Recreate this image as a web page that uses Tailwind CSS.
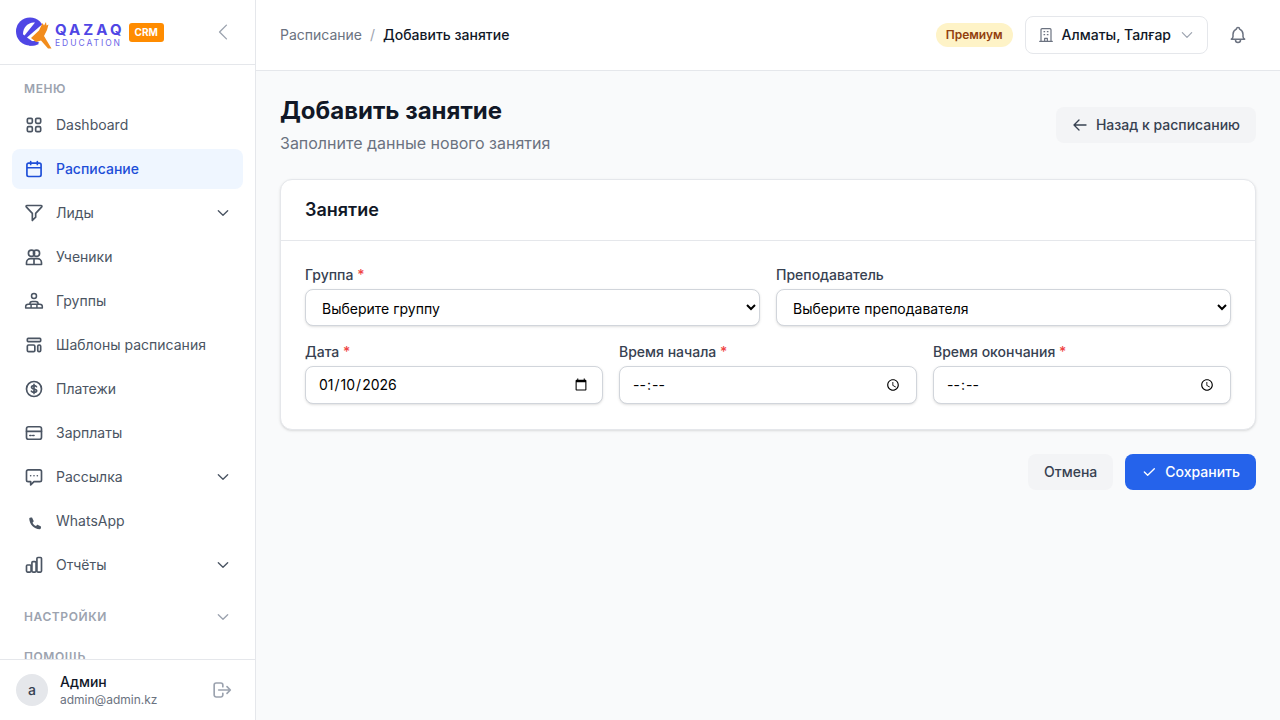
<!DOCTYPE html>
<html lang="ru">
<head>
<meta charset="utf-8">
<script src="https://cdn.jsdelivr.net/npm/@tailwindcss/browser@4"></script>
</head>
<body class="h-[720px] w-[1280px] overflow-hidden bg-[#f9fafb] font-['Inter',sans-serif] text-[#111827]">
<div class="flex h-[720px]">
  <aside class="flex h-full w-[256px] shrink-0 flex-col border-r border-[#e5e7eb] bg-white">
    <div class="flex h-[65px] shrink-0 items-center justify-between border-b border-[#e5e7eb] pl-4 pr-[21px]">
      <div class="flex items-center gap-1">
        <div class="flex items-center gap-[3px]">
          <svg class="h-[33px] w-[36px]" viewBox="0 0 36 33">
            <circle cx="14" cy="15.500" r="14" fill="#4f46e5"/>
            <path fill="#fff" d="M7 17.500C7 11 13 5.500 19 6.500L8.500 19.500C7.500 19 7 18.500 7 17.500Z"/>
            <path fill="#fff" d="M11 21.500 30 5 30 27 16 25Z"/>
            <path fill="#4f46e5" d="M8 20C10 25 15 26.500 19.500 24.500L23 28C19 30 15 30 13 29.500Z"/>
            <path fill="#f28c1c" d="M15 22 23 14.500 26.500 7 28 9.500 30 6 30.500 9.500 32.500 8.500 31 14 28 20 35.500 32.500H32L25 24.500 20 26Z"/>
          </svg>
          <div class="flex flex-col pt-[5px]">
            <span class="text-[15px] leading-[15px] font-bold tracking-[3.050px] text-[#4f46e5]">QAZAQ</span>
            <span class="mt-[1px] text-[8.500px] leading-[10px] tracking-[1.950px] text-[#6d66e8]">EDUCATION</span>
          </div>
        </div>
        <span class="flex h-[19px] w-[35px] items-center justify-center rounded-[3px] bg-[#ff8c00] text-[10px] font-bold text-white">CRM</span>
      </div>
      <svg class="h-[22px] w-[22px] text-[#9ca3af]" fill="none" stroke="currentColor" stroke-width="1.500" viewBox="0 0 24 24"><path stroke-linecap="round" stroke-linejoin="round" d="M15.750 19.500 8.250 12l7.500-7.500"/></svg>
    </div>
    <nav class="min-h-0 flex-1 overflow-hidden px-3 pt-4">
      <div class="mb-2 px-3 text-[12px] leading-4 font-semibold tracking-[0.600px] text-[#9ca3af]">МЕНЮ</div>
      <div class="flex flex-col gap-1">
        <a class="flex h-10 items-center gap-3 rounded-lg px-3 text-sm text-[#4b5563]">
          <svg class="h-5 w-5 shrink-0" fill="none" stroke="currentColor" stroke-width="2" viewBox="0 0 24 24"><rect x="4" y="4" width="6" height="6" rx="1.500"/><rect x="14" y="4" width="6" height="6" rx="1.500"/><rect x="4" y="14" width="6" height="6" rx="1.500"/><rect x="14" y="14" width="6" height="6" rx="1.500"/></svg>
          Dashboard</a>
        <a class="flex h-10 items-center gap-3 rounded-lg bg-[#eff6ff] px-3 text-sm font-medium text-[#1d4ed8]">
          <svg class="h-5 w-5 shrink-0" fill="none" stroke="currentColor" stroke-width="2" viewBox="0 0 24 24"><path stroke-linecap="round" stroke-linejoin="round" d="M3.500 7a2 2 0 0 1 2-2h13a2 2 0 0 1 2 2v12a2 2 0 0 1-2 2h-13a2 2 0 0 1-2-2V7ZM16 3v3.500M8 3v3.500M3.500 10.500h17"/></svg>
          Расписание</a>
        <a class="flex h-10 items-center gap-3 rounded-lg px-3 text-sm text-[#4b5563]">
          <svg class="h-5 w-5 shrink-0" fill="none" stroke="currentColor" stroke-width="2" viewBox="0 0 24 24"><path stroke-linecap="round" stroke-linejoin="round" d="M3.500 3h17a1 1 0 0 1 .8 1.600L14 12.500V17l-4 4v-8.500L2.700 4.600A1 1 0 0 1 3.500 3Z"/></svg>
          <span class="flex-1">Лиды</span>
          <svg class="h-4 w-4 shrink-0" fill="none" stroke="currentColor" stroke-width="2" viewBox="0 0 24 24"><path stroke-linecap="round" stroke-linejoin="round" d="m5 8.500 7 7 7-7"/></svg></a>
        <a class="flex h-10 items-center gap-3 rounded-lg px-3 text-sm text-[#4b5563]">
          <svg class="h-5 w-5 shrink-0" fill="none" stroke="currentColor" stroke-width="2" viewBox="0 0 24 24"><circle cx="9" cy="7.500" r="3.700"/><circle cx="15" cy="7.500" r="3.700"/><path stroke-linejoin="round" d="M3 21v-2a5 5 0 0 1 5-5h8a5 5 0 0 1 5 5v2ZM12 14.500V21"/></svg>
          Ученики</a>
        <a class="flex h-10 items-center gap-3 rounded-lg px-3 text-sm text-[#4b5563]">
          <svg class="h-5 w-5 shrink-0" fill="none" stroke="currentColor" stroke-width="1.800" viewBox="0 0 24 24"><circle cx="12" cy="6" r="3"/><path stroke-linejoin="round" d="M7 16v-.5a3 3 0 0 1 3-3h4a3 3 0 0 1 3 3v.5M2 20.500v-1.500a3 3 0 0 1 3-3h14a3 3 0 0 1 3 3v1.500ZM8.500 16v4.500M15.500 16v4.500"/></svg>
          Группы</a>
        <a class="flex h-10 items-center gap-3 rounded-lg px-3 text-sm text-[#4b5563]">
          <svg class="h-5 w-5 shrink-0" fill="none" stroke="currentColor" stroke-width="2" viewBox="0 0 24 24"><rect x="4" y="4" width="16" height="4" rx="1"/><rect x="4" y="12" width="9" height="8" rx="1.500"/><rect x="16.500" y="12" width="3.500" height="8" rx="1.500"/></svg>
          Шаблоны расписания</a>
        <a class="flex h-10 items-center gap-3 rounded-lg px-3 text-sm text-[#4b5563]">
          <svg class="h-5 w-5 shrink-0" fill="none" stroke="currentColor" stroke-width="2" viewBox="0 0 24 24"><circle cx="12" cy="12" r="9"/><path stroke-linecap="round" stroke-linejoin="round" d="M12 6.500v11M15 9.300C14.500 8.300 13.400 8 12 8c-1.700 0-3 .8-3 2 0 2.800 6.200 1.400 6.200 4.100 0 1.200-1.300 1.900-3.200 1.900-1.500 0-2.600-.4-3.200-1.400"/></svg>
          Платежи</a>
        <a class="flex h-10 items-center gap-3 rounded-lg px-3 text-sm text-[#4b5563]">
          <svg class="h-5 w-5 shrink-0" fill="none" stroke="currentColor" stroke-width="2" viewBox="0 0 24 24"><rect x="3" y="4.500" width="18" height="15" rx="2.500"/><path stroke-linecap="round" d="M3 10h18M7 15h1.500M10.500 15h1.500"/></svg>
          Зарплаты</a>
        <a class="flex h-10 items-center gap-3 rounded-lg px-3 text-sm text-[#4b5563]">
          <svg class="h-5 w-5 shrink-0" fill="none" stroke="currentColor" stroke-width="2" viewBox="0 0 24 24"><path stroke-linejoin="round" d="M5 3.500h14a2 2 0 0 1 2 2v10a2 2 0 0 1-2 2h-7l-4 4v-4H5a2 2 0 0 1-2-2v-10a2 2 0 0 1 2-2Z"/><path stroke-linecap="round" d="M8 10.500h.01M12 10.500h.01M16 10.500h.01"/></svg>
          <span class="flex-1">Рассылка</span>
          <svg class="h-4 w-4 shrink-0" fill="none" stroke="currentColor" stroke-width="2" viewBox="0 0 24 24"><path stroke-linecap="round" stroke-linejoin="round" d="m5 8.500 7 7 7-7"/></svg></a>
        <a class="flex h-10 items-center gap-3 rounded-lg px-3 text-sm text-[#4b5563]">
          <svg class="h-5 w-5 shrink-0" fill="currentColor" viewBox="0 0 24 24"><path d="M9.800 8 11.500 11.700c.2.400.1.900-.2 1.200l-1.100 1.100c.9 1.700 2.300 3 4.200 4l1.200-1.100c.3-.3.800-.4 1.200-.2l3.100 1.500c.4.200.7.700.6 1.100l-.4 1.700c-.1.600-.7 1-1.200 1C11.700 21.600 6.800 16 6.300 9.400c0-.6.300-1.100.9-1.200l1.100-.4c.6-.2 1.200 0 1.500.2Z"/></svg>
          WhatsApp</a>
        <a class="flex h-10 items-center gap-3 rounded-lg px-3 text-sm text-[#4b5563]">
          <svg class="h-5 w-5 shrink-0" fill="none" stroke="currentColor" stroke-width="2" viewBox="0 0 24 24"><rect x="3" y="12" width="5.500" height="8.500" rx="1.200"/><rect x="9.500" y="8" width="5" height="12.500" rx="1.200"/><rect x="15.500" y="3" width="5.500" height="17.500" rx="1.200"/></svg>
          <span class="flex-1">Отчёты</span>
          <svg class="h-4 w-4 shrink-0" fill="none" stroke="currentColor" stroke-width="2" viewBox="0 0 24 24"><path stroke-linecap="round" stroke-linejoin="round" d="m5 8.500 7 7 7-7"/></svg></a>
      </div>
      <div class="mt-6 flex items-center justify-between px-3 text-[12px] leading-4 font-semibold tracking-[0.600px] text-[#9ca3af]">НАСТРОЙКИ
        <svg class="h-4 w-4 shrink-0" fill="none" stroke="currentColor" stroke-width="2" viewBox="0 0 24 24"><path stroke-linecap="round" stroke-linejoin="round" d="m5 8.500 7 7 7-7"/></svg></div>
      <div class="mt-6 px-3 text-[12px] leading-4 font-semibold tracking-[0.600px] text-[#9ca3af]">ПОМОЩЬ</div>
    </nav>
    <div class="flex h-[61px] shrink-0 items-center gap-3 border-t border-[#e5e7eb] px-4">
      <div class="flex h-8 w-8 shrink-0 items-center justify-center rounded-full bg-[#e5e7eb] text-sm font-medium text-[#374151]">a</div>
      <div class="min-w-0 flex-1">
        <div class="text-sm leading-5 font-medium text-[#111827]">Админ</div>
        <div class="text-xs leading-4 text-[#6b7280]">admin@admin.kz</div>
      </div>
      <svg class="mr-[7px] h-5 w-5 shrink-0 text-[#9ca3af]" fill="none" stroke="currentColor" stroke-width="2" viewBox="0 0 24 24"><path stroke-linecap="round" stroke-linejoin="round" d="M13 8V6a2.400 2.400 0 0 0-2.400-2.400H5A2.400 2.400 0 0 0 2.600 6v12A2.400 2.400 0 0 0 5 20.400h5.600A2.400 2.400 0 0 0 13 18v-2M8 12h13.500M18 8l4 4-4 4"/></svg>
    </div>
  </aside>
  <div class="flex min-w-0 flex-1 flex-col">
    <header class="flex h-[71px] shrink-0 items-center justify-between border-b border-[#e5e7eb] bg-white px-6">
      <div class="flex items-center gap-2 text-sm">
        <span class="text-[#6b7280]">Расписание</span><span class="text-[#9ca3af]">/</span><span class="font-medium text-[#111827]">Добавить занятие</span>
      </div>
      <div class="flex items-center gap-3">
        <span class="rounded-full bg-[#fef3c7] px-[10px] py-1 text-xs leading-4 font-semibold text-[#92400e]">Премиум</span>
        <div class="flex h-[38px] items-center gap-2 rounded-lg border border-[#e5e7eb] bg-white px-3 text-sm font-medium text-[#111827]">
          <svg class="h-4 w-4 text-[#6b7280]" fill="none" stroke="currentColor" stroke-width="1.800" viewBox="0 0 24 24"><path stroke-linejoin="round" stroke-linecap="round" d="M2.500 21.500h19M4.500 21.500V4A1.500 1.500 0 0 1 6 2.500h12A1.500 1.500 0 0 1 19.500 4v17.500M10 21.500v-4.500h4v4.500M9 7h1M14 7h1M9 11.500h1M14 11.500h1"/></svg>
          Алматы, Талғар
          <svg class="h-4 w-4 text-[#9ca3af]" fill="none" stroke="currentColor" stroke-width="1.800" viewBox="0 0 24 24"><path stroke-linecap="round" stroke-linejoin="round" d="m5 8.500 7 7 7-7"/></svg>
        </div>
        <div class="mx-2 flex h-5 w-5 items-center justify-center text-[#6b7280]">
          <svg class="h-5 w-5" fill="none" stroke="currentColor" stroke-width="1.800" viewBox="0 0 24 24"><path stroke-linecap="round" stroke-linejoin="round" d="M10 5a2 2 0 1 1 4 0 7 7 0 0 1 4 6v3a4 4 0 0 0 2 3H4a4 4 0 0 0 2-3v-3a7 7 0 0 1 4-6M9 17v1a3 3 0 0 0 6 0v-1"/></svg>
        </div>
      </div>
    </header>
    <main class="flex-1 px-6 pt-6">
      <div class="flex items-center justify-between">
        <div>
          <h1 class="text-2xl leading-8 font-bold text-[#111827]">Добавить занятие</h1>
          <p class="mt-1 text-base leading-6 text-[#6b7280]">Заполните данные нового занятия</p>
        </div>
        <button class="flex h-9 items-center gap-2 rounded-lg bg-[#f3f4f6] px-4 text-sm font-medium text-[#374151]">
          <svg class="h-4 w-4" fill="none" stroke="currentColor" stroke-width="2" viewBox="0 0 24 24"><path stroke-linecap="round" stroke-linejoin="round" d="M10.500 19.500 3 12m0 0 7.500-7.500M3 12h18"/></svg>
          Назад к расписанию</button>
      </div>
      <section class="mt-6 rounded-xl border border-[#e5e7eb] bg-white shadow-sm">
        <div class="flex h-[61px] items-center border-b border-[#e5e7eb] px-6">
          <h2 class="text-lg font-semibold text-[#111827]">Занятие</h2>
        </div>
        <div class="flex flex-col gap-4 px-6 pt-6 pb-[25px]">
          <div class="grid grid-cols-2 gap-4">
            <label class="block">
              <span class="mb-1 block text-sm leading-5 font-medium text-[#374151]">Группа <span class="text-[#ef4444]">*</span></span>
              <select class="block h-[37px] w-full rounded-lg border border-[#d1d5db] bg-white px-3 pt-[2px] text-sm text-black shadow-sm"><option>Выберите группу</option></select>
            </label>
            <label class="block">
              <span class="mb-1 block text-sm leading-5 font-medium text-[#374151]">Преподаватель</span>
              <select class="block h-[37px] w-full rounded-lg border border-[#d1d5db] bg-white px-3 pt-[2px] text-sm text-black shadow-sm"><option>Выберите преподавателя</option></select>
            </label>
          </div>
          <div class="grid grid-cols-3 gap-4">
            <label class="block">
              <span class="mb-1 block text-sm leading-5 font-medium text-[#374151]">Дата <span class="text-[#ef4444]">*</span></span>
              <input type="date" value="2026-01-10" class="block h-[38px] w-full rounded-lg border border-[#d1d5db] bg-white px-3 text-sm text-black shadow-sm">
            </label>
            <label class="block">
              <span class="mb-1 block text-sm leading-5 font-medium text-[#374151]">Время начала <span class="text-[#ef4444]">*</span></span>
              <input type="time" class="block h-[38px] w-full rounded-lg border border-[#d1d5db] bg-white px-3 text-sm text-black shadow-sm [&::-webkit-datetime-edit-ampm-field]:hidden">
            </label>
            <label class="block">
              <span class="mb-1 block text-sm leading-5 font-medium text-[#374151]">Время окончания <span class="text-[#ef4444]">*</span></span>
              <input type="time" class="block h-[38px] w-full rounded-lg border border-[#d1d5db] bg-white px-3 text-sm text-black shadow-sm [&::-webkit-datetime-edit-ampm-field]:hidden">
            </label>
          </div>
        </div>
      </section>
      <div class="mt-6 flex justify-end gap-3">
        <button class="h-9 rounded-lg bg-[#f3f4f6] px-4 text-sm font-medium text-[#374151]">Отмена</button>
        <button class="flex h-9 items-center gap-2 rounded-lg bg-[#2563eb] px-4 text-sm font-medium text-white">
          <svg class="h-4 w-4" fill="none" stroke="currentColor" stroke-width="2" viewBox="0 0 24 24"><path stroke-linecap="round" stroke-linejoin="round" d="m5 12 5 5L20 7"/></svg>
          Сохранить</button>
      </div>
    </main>
  </div>
</div>
</body>
</html>
